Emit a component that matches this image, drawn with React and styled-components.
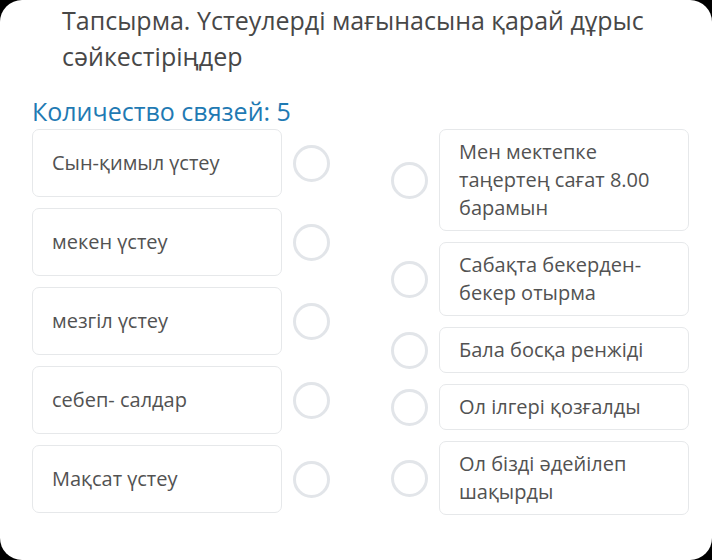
import React from 'react';
import styled, { createGlobalStyle } from 'styled-components';

const GlobalStyle = createGlobalStyle`
  html, body {
    margin: 0;
    padding: 0;
    background: #000;
  }
  * {
    box-sizing: border-box;
  }
`;

const Screen = styled.div`
  width: 712px;
  height: 560px;
  background: #fff;
  border-radius: 22px;
  overflow: hidden;
  font-family: "Open Sans", "Noto Sans", sans-serif;
  padding-top: 2px;
`;

const Title = styled.h1`
  margin: 0;
  padding-left: 62px;
  padding-right: 30px;
  font-size: 25px;
  line-height: 36px;
  font-weight: 400;
  color: #474747;
`;

const Count = styled.div`
  margin-top: 19px;
  padding-left: 32px;
  font-size: 25px;
  line-height: 36px;
  color: #1f7ab3;
`;

const Board = styled.div`
  display: flex;
  gap: 61px;
  padding-left: 32px;
`;

const Column = styled.div`
  width: 298px;
  display: flex;
  flex-direction: column;
  gap: 11px;
`;

const Row = styled.div`
  display: flex;
  align-items: center;
  gap: 11px;
`;

const Card = styled.div`
  width: 250px;
  flex-shrink: 0;
  border: 1px solid #e6e8ea;
  border-radius: 7px;
  padding: 8px 19px;
  font-size: 20px;
  line-height: 28px;
  color: #525252;
  display: flex;
  align-items: center;
  min-height: ${(p) => (p.$fixed ? '68px' : 'auto')};
`;

const Dot = styled.div`
  width: 37px;
  height: 37px;
  flex-shrink: 0;
  border-radius: 50%;
  border: 3px solid #e2e5e9;
`;

const left = ['Сын-қимыл үстеу', 'мекен үстеу', 'мезгіл үстеу', 'себеп- салдар', 'Мақсат үстеу'];
const right = [
  'Мен мектепке таңертең сағат 8.00 барамын',
  'Сабақта бекерден-бекер отырма',
  'Бала босқа ренжіді',
  'Ол ілгері қозғалды',
  'Ол бізді әдейілеп шақырды',
];

const App = () => {
  return (
    <>
      <GlobalStyle />
      <Screen>
        <Title>Тапсырма. Үстеулерді мағынасына қарай дұрыс сәйкестіріңдер</Title>
        <Count>Количество связей: 5</Count>
        <Board>
          <Column>
            {left.map((t) => (
              <Row key={t}>
                <Card $fixed>{t}</Card>
                <Dot />
              </Row>
            ))}
          </Column>
          <Column>
            {right.map((t) => (
              <Row key={t}>
                <Dot />
                <Card>{t}</Card>
              </Row>
            ))}
          </Column>
        </Board>
      </Screen>
    </>
  );
};

export default App;
